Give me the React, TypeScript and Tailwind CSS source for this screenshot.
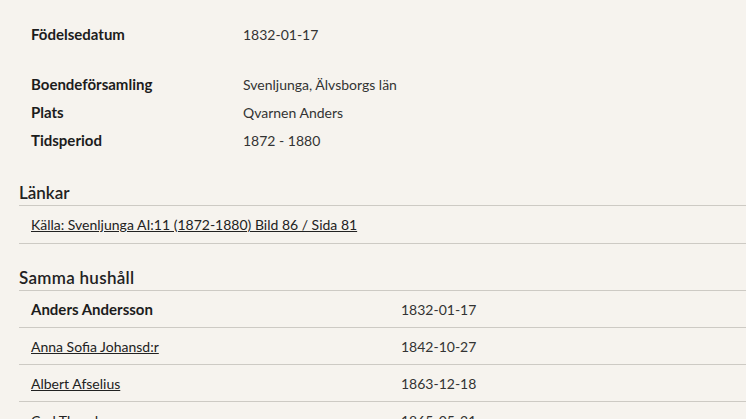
import React from 'react';

const facts: { label: string; value: string; gap?: boolean }[] = [
  { label: 'Födelsedatum', value: '1832-01-17' },
  { label: 'Boendeförsamling', value: 'Svenljunga, Älvsborgs län', gap: true },
  { label: 'Plats', value: 'Qvarnen Anders' },
  { label: 'Tidsperiod', value: '1872 - 1880' },
];

const household: { name: string; date: string; link: boolean }[] = [
  { name: 'Anders Andersson', date: '1832-01-17', link: false },
  { name: 'Anna Sofia Johansd:r', date: '1842-10-27', link: true },
  { name: 'Albert Afselius', date: '1863-12-18', link: true },
  { name: 'Carl Theodor', date: '1865-05-21', link: true },
];

export default function App() {
  return (
    <div className="w-[746px] h-[419px] overflow-hidden bg-[#f6f3ee] text-[#2a2a2a] text-[14px] font-['Lato','Liberation_Sans',sans-serif]">
      <div className="pl-[19px]">
        {/* person facts */}
        <div className="pt-5 pl-3">
          {facts.map((f) => (
            <div key={f.label} className={`flex h-7 items-center ${f.gap ? 'mt-[22px]' : ''}`}>
              <div className="w-[212px] text-[15px] font-bold text-[#1c1c1c]">{f.label}</div>
              <div className="text-[#333]">{f.value}</div>
            </div>
          ))}
        </div>

        {/* links */}
        <h2 className="mt-[27px] h-[25px] leading-[24px] text-[17px] font-semibold text-[#222] border-b border-[#cdcac4]">
          Länkar
        </h2>
        <div className="h-[38px] flex items-center pl-3 border-b border-[#cdcac4]">
          <a href="#" className="underline text-[#222]">
            Källa: Svenljunga AI:11 (1872-1880) Bild 86 / Sida 81
          </a>
        </div>

        {/* household */}
        <h2 className="mt-[22px] h-[25px] leading-[24px] text-[17px] font-semibold tracking-[0.3px] text-[#222] border-b border-[#cdcac4]">
          Samma hushåll
        </h2>
        {household.map((p) => (
          <div key={p.name} className="h-[37px] flex items-center px-3 border-b border-[#cdcac4]">
            <div className="w-[370px]">
              {p.link ? (
                <a href="#" className="underline text-[#222]">{p.name}</a>
              ) : (
                <span className="text-[15px] font-bold text-[#1c1c1c]">{p.name}</span>
              )}
            </div>
            <div className="text-[#333]">{p.date}</div>
          </div>
        ))}
      </div>
    </div>
  );
}
